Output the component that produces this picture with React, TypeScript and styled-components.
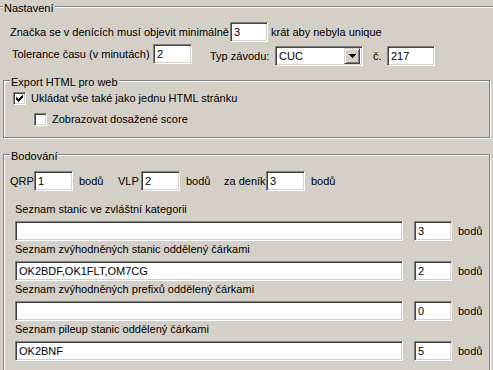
import { FC } from 'react';
import styled, { createGlobalStyle } from 'styled-components';

const FACE = '#d4d0c8';

const GlobalStyle = createGlobalStyle`
  html, body {
    margin: 0;
    padding: 0;
    background: ${FACE};
  }
  body {
    font-family: "Liberation Sans", Arial, sans-serif;
    font-size: 11px;
    color: #000;
  }
`;

const Page = styled.div`
  width: 493px;
  height: 370px;
  overflow: hidden;
  padding-top: 6px;
  box-sizing: border-box;
`;

const Group = styled.div<{ $left?: number; $width?: number; $top?: number; $height?: number }>`
  position: relative;
  box-sizing: border-box;
  border: 1px solid #808080;
  box-shadow: inset 1px 1px #fff, 1px 1px #fff;
  margin-top: ${(p) => p.$top ?? 0}px;
  margin-left: ${(p) => p.$left ?? 0}px;
  width: ${(p) => (p.$width ? `${p.$width}px` : 'auto')};
  height: ${(p) => (p.$height ? `${p.$height}px` : 'auto')};
`;

const OuterGroup = styled(Group)`
  margin-left: -4px;
  margin-right: -6px;
  padding-left: 3px;
  height: 420px;
`;

const Legend = styled.span`
  position: absolute;
  top: -5px;
  left: 6px;
  padding: 0 1px;
  background: ${FACE};
  line-height: 12px;
  white-space: nowrap;
`;

const Row = styled.div<{ $top?: number; $left?: number }>`
  display: flex;
  align-items: flex-start;
  margin-top: ${(p) => p.$top ?? 0}px;
  margin-left: ${(p) => p.$left ?? 0}px;
`;

const Label = styled.span<{ $w?: number; $ml?: number; $mt?: number }>`
  flex: none;
  display: block;
  width: ${(p) => (p.$w ? `${p.$w}px` : 'auto')};
  margin-left: ${(p) => p.$ml ?? 0}px;
  margin-top: ${(p) => p.$mt ?? 3}px;
  line-height: 14px;
  white-space: nowrap;
`;

const Edit = styled.input<{ $w: number; $mt?: number; $ml?: number }>`
  flex: none;
  box-sizing: border-box;
  width: ${(p) => p.$w}px;
  height: 20px;
  margin: ${(p) => p.$mt ?? 0}px 0 0 ${(p) => p.$ml ?? 0}px;
  padding: 0 0 0 3px;
  border: 1px solid;
  border-color: #808080 #fff #fff #808080;
  box-shadow: inset 1px 1px #404040, inset -1px -1px ${FACE};
  background: #fff;
  font: inherit;
  font-size: 11px;
  color: #000;
  outline: none;
`;

const Combo = styled.div<{ $w: number; $mt?: number }>`
  flex: none;
  box-sizing: border-box;
  display: flex;
  align-items: center;
  width: ${(p) => p.$w}px;
  height: 20px;
  margin-top: ${(p) => p.$mt ?? 0}px;
  padding: 2px 2px 2px 3px;
  border: 1px solid;
  border-color: #808080 #fff #fff #808080;
  box-shadow: inset 1px 1px #404040, inset -1px -1px ${FACE};
  background: #fff;
`;

const ComboText = styled.span`
  flex: 1;
  line-height: 14px;
`;

const DropButton = styled.div`
  box-sizing: border-box;
  width: 16px;
  height: 16px;
  display: grid;
  place-items: center;
  background: ${FACE};
  border: 1px solid;
  border-color: ${FACE} #404040 #404040 ${FACE};
  box-shadow: inset 1px 1px #fff, inset -1px -1px #808080;
`;

const CheckRow = styled.div<{ $top: number; $left: number }>`
  display: flex;
  align-items: center;
  gap: 5px;
  margin-top: ${(p) => p.$top}px;
  margin-left: ${(p) => p.$left}px;
  line-height: 13px;
`;

const CheckBox = styled.div`
  flex: none;
  box-sizing: border-box;
  width: 13px;
  height: 13px;
  border: 1px solid;
  border-color: #808080 #fff #fff #808080;
  box-shadow: inset 1px 1px #404040, inset -1px -1px ${FACE};
  background: #fff;
  position: relative;
`;

const CheckMark = styled.svg`
  position: absolute;
  left: 1px;
  top: 1px;
`;

const ListBlock = styled.div<{ $top: number }>`
  margin-top: ${(p) => p.$top}px;
  margin-left: 11px;
`;

const ListLabel = styled.div`
  line-height: 13px;
  height: 13px;
  white-space: nowrap;
`;

const ListRow = styled.div`
  display: flex;
  align-items: flex-start;
  margin-top: 5px;
`;

const CHECK_PIXELS = [
  [6, 0], [5, 1], [6, 1], [0, 2], [4, 2], [5, 2], [6, 2],
  [0, 3], [1, 3], [3, 3], [4, 3], [5, 3],
  [0, 4], [1, 4], [2, 4], [3, 4], [4, 4],
  [1, 5], [2, 5], [3, 5], [2, 6],
];

const Check: FC<{ checked?: boolean }> = ({ checked }) => (
  <CheckBox>
    {checked && (
      <CheckMark width="9" height="9" viewBox="0 0 9 9" shapeRendering="crispEdges">
        {CHECK_PIXELS.map(([x, y]) => (
          <rect key={`${x}-${y}`} x={x + 1} y={y + 1} width="1" height="1" fill="#000" />
        ))}
      </CheckMark>
    )}
  </CheckBox>
);

const lists = [
  { label: 'Seznam stanic ve zvláštní kategorii', value: '', points: '3', top: 12 },
  { label: 'Seznam zvýhodněných stanic oddělený čárkami', value: 'OK2BDF,OK1FLT,OM7CG', points: '2', top: 2 },
  { label: 'Seznam zvýhodněných prefixů oddělený čárkami', value: '', points: '0', top: 2 },
  { label: 'Seznam pileup stanic oddělený čárkami', value: 'OK2BNF', points: '5', top: 2 },
];

const App: FC = () => (
  <>
    <GlobalStyle />
    <Page>
      <OuterGroup>
        <Legend>Nastavení</Legend>

        <Row $top={15}>
          <Label $ml={10} $w={220}>Značka se v denících musí objevit minimálně</Label>
          <Edit $w={38} value="3" readOnly />
          <Label $ml={3}>krát aby nebyla unique</Label>
        </Row>

        <Row $top={2}>
          <Label $ml={12} $w={141}>Tolerance času (v minutách)</Label>
          <Edit $w={39} value="2" readOnly />
          <Label $ml={18} $w={65} $mt={5}>Typ závodu:</Label>
          <Combo $w={88} $mt={2}>
            <ComboText>CUC</ComboText>
            <DropButton>
              <svg width="7" height="4" viewBox="0 0 7 4" shapeRendering="crispEdges">
                <path d="M0 0h7v1H0zM1 1h5v1H1zM2 2h3v1H2zM3 3h1v1H3z" fill="#000" />
              </svg>
            </DropButton>
          </Combo>
          <Label $ml={10} $w={14} $mt={5}>č.</Label>
          <Edit $w={48} $mt={2} value="217" readOnly />
        </Row>

        <Group $top={14} $left={3} $width={487} $height={58}>
          <Legend>Export HTML pro web</Legend>
          <CheckRow $top={11} $left={9}>
            <Check checked />
            <span>Ukládat vše také jako jednu HTML stránku</span>
          </CheckRow>
          <CheckRow $top={8} $left={30}>
            <Check />
            <span>Zobrazovat dosažené score</span>
          </CheckRow>
        </Group>

        <Group $top={16} $left={3} $width={487} $height={260}>
          <Legend>Bodování</Legend>
          <Row $top={16} $left={6}>
            <Label $w={24}>QRP</Label>
            <Edit $w={39} value="1" readOnly />
            <Label $ml={6} $w={39}>bodů</Label>
            <Label $w={23}>VLP</Label>
            <Edit $w={39} value="2" readOnly />
            <Label $ml={6} $w={38}>bodů</Label>
            <Label $w={42}>za deník</Label>
            <Edit $w={39} value="3" readOnly />
            <Label $ml={6}>bodů</Label>
          </Row>

          {lists.map((l) => (
            <ListBlock key={l.label} $top={l.top}>
              <ListLabel>{l.label}</ListLabel>
              <ListRow>
                <Edit $w={388} value={l.value} readOnly />
                <Edit $w={38} $ml={11} value={l.points} readOnly />
                <Label $ml={6}>bodů</Label>
              </ListRow>
            </ListBlock>
          ))}
        </Group>
      </OuterGroup>
    </Page>
  </>
);

export default App;
